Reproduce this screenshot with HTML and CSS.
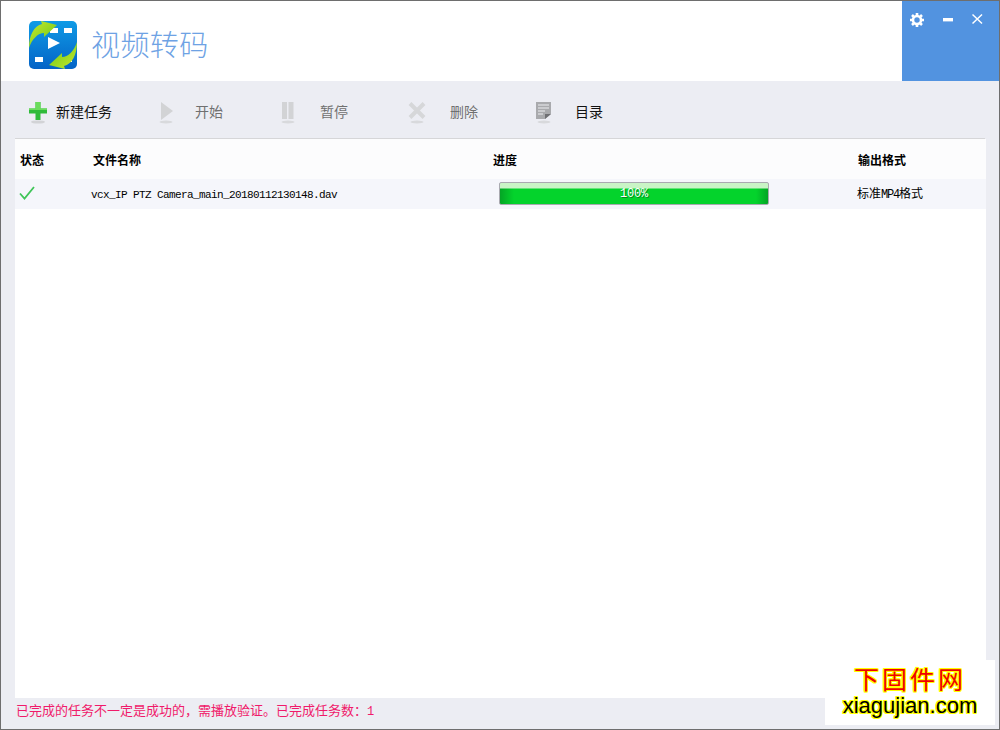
FILE: index.html
```html
<!DOCTYPE html>
<html lang="zh-CN">
<head>
<meta charset="UTF-8">
<title>视频转码</title>
<link rel="stylesheet" href="styles.css">
</head>
<body>
<div class="window">
    <div class="header">
        <div class="brand">
            <svg class="logo" width="48" height="48" viewBox="0 0 48 48">
                <defs>
                    <linearGradient id="logoBlue" x1="0" y1="0" x2="0" y2="1">
                        <stop offset="0" stop-color="#0f9be6"/>
                        <stop offset="1" stop-color="#0463c6"/>
                    </linearGradient>
                    <linearGradient id="arrowGreen" x1="0" y1="0" x2="1" y2="1">
                        <stop offset="0" stop-color="#c6ea2e"/>
                        <stop offset="1" stop-color="#68c416"/>
                    </linearGradient>
                </defs>
                <rect width="48" height="48" rx="5" fill="url(#logoBlue)"/>
                <rect x="21" y="7" width="8" height="5" fill="#fff"/>
                <rect x="35" y="7" width="8" height="5" fill="#fff"/>
                <rect x="6" y="36" width="8" height="5" fill="#fff"/>
                <rect x="35" y="36" width="8" height="5" fill="#fff"/>
                <path d="M19 16 L31 22 L19 28 Z" fill="#fff"/>
                <path d="M0 27 C0 14 5 5 13 3 L12 0 L28 4 L15 16 L15 12 C9 12 3 18 0 27 Z" fill="url(#arrowGreen)"/>
                <path d="M0 27 C0 14 5 5 13 3 L12 0 L28 4 L15 16 L15 12 C9 12 3 18 0 27 Z" fill="url(#arrowGreen)" transform="rotate(180 24 24)"/>
            </svg>
            <span class="app-title">视频转码</span>
        </div>
        <div class="win-controls">
            <svg width="14" height="14" viewBox="0 0 16 16">
                <circle cx="8" cy="8" r="4.6" fill="none" stroke="#fff" stroke-width="3"/>
                <path d="M8 0 V16 M0 8 H16 M2.3 2.3 L13.7 13.7 M13.7 2.3 L2.3 13.7" stroke="#fff" stroke-width="3" stroke-dasharray="2.6 20"/>
                <path d="M8 16 V0 M16 8 H0 M13.7 13.7 L2.3 2.3 M2.3 13.7 L13.7 2.3" stroke="#fff" stroke-width="3" stroke-dasharray="2.6 20"/>
            </svg>
            <svg class="win-min" width="12" height="12" viewBox="0 0 12 12"><rect x="1" y="4" width="10" height="3.4" fill="#fff"/></svg>
            <svg width="12" height="12" viewBox="0 0 12 12"><path d="M0.5 1.5 L10 10.5 M10 1.5 L0.5 10.5" stroke="#fff" stroke-width="1.5"/></svg>
        </div>
    </div>

    <div class="toolbar">
        <div class="tool tool-new">
            <svg class="tool-icon" width="18" height="24" viewBox="0 0 18 24">
                <ellipse cx="9" cy="20" rx="7" ry="1.6" fill="#d2d3d6"/>
                <path d="M6.5 0 H11.5 V6.5 H18 V11.5 H11.5 V18 H6.5 V11.5 H0 V6.5 H6.5 Z" fill="#2fbb3a"/>
                <path d="M6.5 0 H11.5 V6.5 H6.5 Z M0 6.5 H18 V8 H0 Z" fill="#6bdc5c"/>
            </svg>
            <span>新建任务</span>
        </div>
        <div class="tool tool-start">
            <svg class="tool-icon" width="18" height="24" viewBox="0 0 18 24">
                <ellipse cx="9" cy="20" rx="6.5" ry="1.5" fill="#d8d9dc"/>
                <path d="M4 0 L16 9 L4 18 Z" fill="#d2d3d5"/>
            </svg>
            <span>开始</span>
        </div>
        <div class="tool tool-pause">
            <svg class="tool-icon" width="18" height="24" viewBox="0 0 18 24">
                <ellipse cx="8" cy="20" rx="6.5" ry="1.5" fill="#d8d9dc"/>
                <rect x="2" y="0" width="5" height="17" fill="#d2d3d5"/>
                <rect x="8.5" y="0" width="5" height="17" fill="#d2d3d5"/>
            </svg>
            <span>暂停</span>
        </div>
        <div class="tool tool-del">
            <svg class="tool-icon" width="18" height="24" viewBox="0 0 18 24">
                <ellipse cx="9" cy="20" rx="6.5" ry="1.5" fill="#d8d9dc"/>
                <path d="M2 1.5 L16 15.5 M16 1.5 L2 15.5" stroke="#d6d7d9" stroke-width="4"/>
            </svg>
            <span>删除</span>
        </div>
        <div class="tool tool-dir">
            <svg class="tool-icon" width="18" height="24" viewBox="0 0 18 24">
                <ellipse cx="9" cy="20" rx="6.5" ry="1.5" fill="#d8d9dc"/>
                <path d="M1 0 H16 V12 L10 17 H1 Z" fill="#a9aaad"/>
                <path d="M3 3 H14 M3 6 H14 M3 9 H10 M3 12 H8" stroke="#eeeef1" stroke-width="1.2"/>
                <path d="M10 17 V12 H16 Z" fill="#6f7073"/>
            </svg>
            <span>目录</span>
        </div>
    </div>

    <div class="list">
        <div class="list-head">
            <div>状态</div>
            <div>文件名称</div>
            <div>进度</div>
            <div>输出格式</div>
        </div>
        <div class="list-row">
            <svg class="check" width="16" height="14" viewBox="0 0 16 14">
                <path d="M1 7.5 L5.5 12.5 L15 1" fill="none" stroke="#3fc558" stroke-width="1.8"/>
            </svg>
            <div class="file-name">vcx_IP PTZ Camera_main_20180112130148.dav</div>
            <div class="progress"><span>100%</span></div>
            <div class="format">标准<span class="mono">MP4</span>格式</div>
        </div>
    </div>

    <div class="status-bar">已完成的任务不一定是成功的，需播放验证。已完成任务数：<span class="mono">1</span></div>

    <div class="watermark">
        <div class="wm-cn">下固件网</div>
        <div class="wm-en">xiagujian.com</div>
    </div>
</div>
</body>
</html>
```

FILE: styles.css
```css
* {
    box-sizing: border-box;
}
body {
    margin: 0;
    font-family: "Noto Sans CJK SC", "Liberation Sans", sans-serif;
    color: #000;
}
.window {
    position: relative;
    width: 1000px;
    height: 730px;
    display: flex;
    flex-direction: column;
    background-color: #ecedf3;
    border: 1px solid #6e6e6e;
    overflow: hidden;
}
.header {
    height: 80px;
    display: flex;
    justify-content: space-between;
    background-color: #fff;
}
.brand {
    display: flex;
    align-items: flex-start;
    padding: 20px 0 0 28px;
}
.app-title {
    margin-left: 14px;
    margin-top: 1px;
    font-size: 29px;
    line-height: 42px;
    font-weight: 300;
    color: #6ea2e4;
    letter-spacing: 0.4px;
}
.win-controls {
    width: 97px;
    height: 80px;
    display: flex;
    align-items: flex-start;
    gap: 18px;
    padding: 12px 0 0 8px;
    background-color: #5293e0;
}
.win-min {
    margin-top: 1px;
}
.toolbar {
    height: 58px;
    display: grid;
    grid-template-columns: 128px 123px 128px 127px auto;
    align-items: start;
    margin: 0 14px;
    padding: 21px 0 0 14px;
    border-bottom: 1px solid #d6d6d8;
}
.tool {
    display: flex;
    align-items: flex-start;
    font-size: 14px;
    line-height: 20px;
}
.tool span {
    margin-top: -1px;
}
.tool-icon {
    flex: none;
}
.tool-new {
    gap: 9px;
    color: #111;
}
.tool-start {
    gap: 20px;
    color: #707070;
}
.tool-pause {
    gap: 22px;
    color: #707070;
}
.tool-del {
    gap: 24px;
    color: #707070;
}
.tool-dir {
    gap: 22px;
    color: #111;
}
.list {
    height: 559px;
    margin: 0 13px 0 14px;
    background-color: #fff;
}
.list-head {
    height: 40px;
    display: grid;
    grid-template-columns: 73px 400px 365px auto;
    align-items: center;
    padding-left: 5px;
    background-color: #fcfcfd;
    font-size: 12px;
    font-weight: 700;
}
.list-row {
    height: 30px;
    display: grid;
    grid-template-columns: 72px 408px 358px auto;
    align-items: center;
    padding-left: 4px;
    background-color: #f5f6fb;
    font-size: 12px;
}
.check {
    margin-top: -2px;
}
.file-name,
.mono {
    font-family: "Liberation Mono", monospace;
    font-size: 11px;
    letter-spacing: -0.6px;
}
.file-name {
    margin-top: 1px;
}
.progress {
    width: 270px;
    height: 23px;
    margin-top: -1px;
    display: flex;
    align-items: center;
    justify-content: center;
    border: 1px solid #a9a9b0;
    border-radius: 2px;
    background:
        linear-gradient(to bottom, #c9f4c6 0, #c9f4c6 5px, transparent 6px),
        linear-gradient(to right, #04a525, #04d32c 14px, #04d32c 256px, #04a525);
    color: #fff;
    font-family: "Liberation Mono", monospace;
    font-size: 12px;
    letter-spacing: -0.2px;
    text-shadow: 1px 1px 0 rgba(0, 90, 20, 0.6);
}
.format {
    margin-top: -2px;
    white-space: nowrap;
}
.format .mono {
    font-size: 12px;
    letter-spacing: -1.2px;
}
.status-bar {
    flex: 1;
    padding: 2px 0 0 15px;
    color: #f01a6a;
    font-size: 13px;
    line-height: 20px;
}
.status-bar .mono {
    font-size: 12px;
}
.watermark {
    position: absolute;
    left: 824px;
    top: 659px;
    width: 170px;
    height: 65px;
    padding-top: 5px;
    background-color: #fff;
    text-align: center;
    text-shadow: 1px 0 0 #ff0, -1px 0 0 #ff0, 0 1px 0 #ff0, 0 -1px 0 #ff0, 1px 1px 0 #ff0, -1px -1px 0 #ff0, 1px -1px 0 #ff0, -1px 1px 0 #ff0;
}
.wm-cn {
    font-family: "Noto Sans CJK SC", sans-serif;
    font-size: 25px;
    line-height: 27px;
    letter-spacing: 3px;
    color: #f00000;
}
.wm-en {
    font-family: "Liberation Sans", sans-serif;
    font-size: 22px;
    line-height: 27px;
    color: #000;
}
```
